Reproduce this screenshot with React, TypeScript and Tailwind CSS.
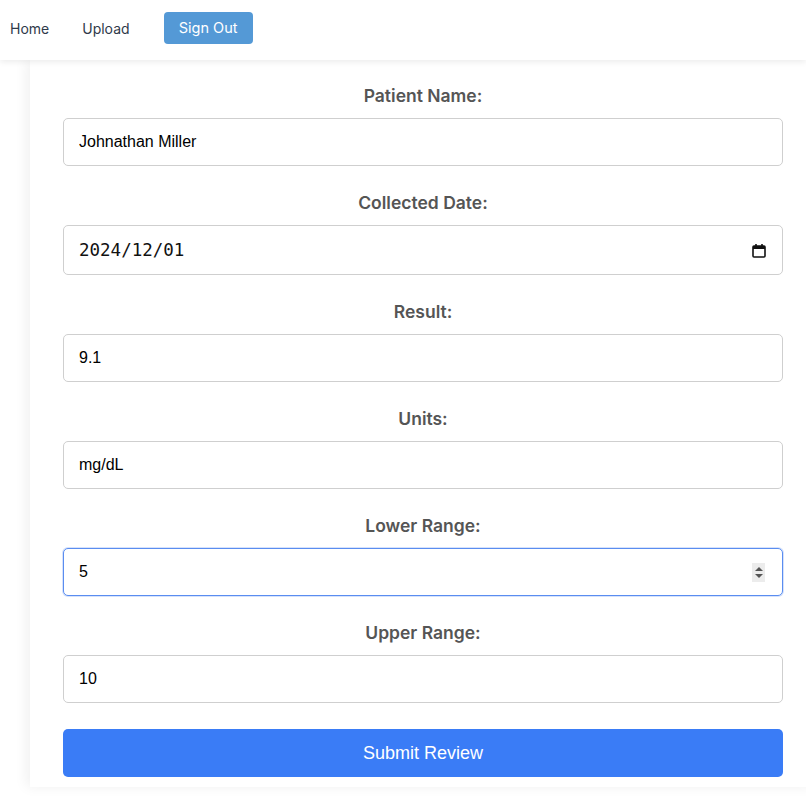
import { useState } from 'react';

const labelCls = 'block h-[20px] text-center text-[17.5px] leading-[20px] font-semibold text-[#555]';
const baseBox = 'flex items-center w-full rounded-[5px] border bg-white px-[15px] text-[16px] text-black';
const boxCls = `${baseBox} border-[#cfcfcf]`;

function Field({ label, value, onChange }: { label: string; value: string; onChange: (v: string) => void }) {
  return (
    <div className="flex flex-col gap-[12px]">
      <label className={labelCls}>{label}</label>
      <input
        className={`${boxCls} h-[48px] outline-none`}
        style={{ fontFamily: '"Liberation Sans", Arial, sans-serif' }}
        value={value}
        onChange={(e) => onChange(e.target.value)}
      />
    </div>
  );
}

export default function App() {
  const [form, setForm] = useState({
    name: 'Johnathan Miller',
    date: '2024/12/01',
    result: '9.1',
    units: 'mg/dL',
    lower: '5',
    upper: '10',
  });
  const set = (k: keyof typeof form) => (v: string) => setForm({ ...form, [k]: v });

  return (
    <div className="h-[796px] w-[806px] overflow-hidden bg-white" style={{ fontFamily: 'Inter, "Noto Sans", sans-serif' }}>
      <nav className="relative z-10 flex h-[60px] items-center bg-white pb-[4px] shadow-[0_2px_6px_rgba(0,0,0,0.08)]">
        <a className="ml-[10px] text-[14px] text-[#2f3a4a]">Home</a>
        <a className="ml-[33px] text-[14px] text-[#2f3a4a]">Upload</a>
        <button className="ml-[34px] h-[32px] w-[89px] rounded-[4px] bg-[#5499d6] text-[14.5px] text-white">Sign Out</button>
      </nav>

      <div className="ml-[30px] w-[786px] bg-white px-[33px] pt-[26px] pb-[10px] shadow-[-4px_0_12px_rgba(0,0,0,0.06)]">
        <div className="flex flex-col gap-[27px]">
          <Field label="Patient Name:" value={form.name} onChange={set('name')} />

          <div className="flex flex-col gap-[12px]">
            <label className={labelCls}>Collected Date:</label>
            <div className={`${boxCls} h-[50px] justify-between`}>
              <span className="text-[17.5px] text-[#111]" style={{ fontFamily: '"DejaVu Sans Mono", monospace' }}>
                {form.date}
              </span>
              <svg width="14" height="15" viewBox="0 0 14 15" className="mr-[1px]">
                <rect x="1" y="3" width="12" height="11" rx="1" fill="none" stroke="#111" strokeWidth="1.6" />
                <rect x="1" y="3" width="12" height="3" fill="#111" />
                <rect x="3.2" y="1" width="1.6" height="3" fill="#111" />
                <rect x="9.2" y="1" width="1.6" height="3" fill="#111" />
              </svg>
            </div>
          </div>

          <Field label="Result:" value={form.result} onChange={set('result')} />
          <Field label="Units:" value={form.units} onChange={set('units')} />

          <div className="flex flex-col gap-[12px]">
            <label className={labelCls}>Lower Range:</label>
            <div className={`${baseBox} h-[48px] justify-between border-[#5a8df0] shadow-[0_0_0_1px_rgba(90,141,240,0.25)]`}>
              <input
                className="w-full bg-transparent text-[16px] outline-none"
                style={{ fontFamily: '"Liberation Sans", Arial, sans-serif' }}
                value={form.lower}
                onChange={(e) => set('lower')(e.target.value)}
              />
              <span className="mr-[2px] flex h-[19px] w-[13px] flex-col items-center justify-center gap-[3px] bg-[#ececec]">
                <span className="h-0 w-0 border-x-[4px] border-b-[4px] border-x-transparent border-b-[#555]" />
                <span className="h-0 w-0 border-x-[4px] border-t-[4px] border-x-transparent border-t-[#555]" />
              </span>
            </div>
          </div>

          <Field label="Upper Range:" value={form.upper} onChange={set('upper')} />
        </div>

        <button
          className="mt-[26px] h-[48px] w-full rounded-[5px] bg-[#3a7cf6] text-[18px] text-white"
          style={{ fontFamily: '"Liberation Sans", Arial, sans-serif' }}
        >
          Submit Review
        </button>
      </div>
    </div>
  );
}
